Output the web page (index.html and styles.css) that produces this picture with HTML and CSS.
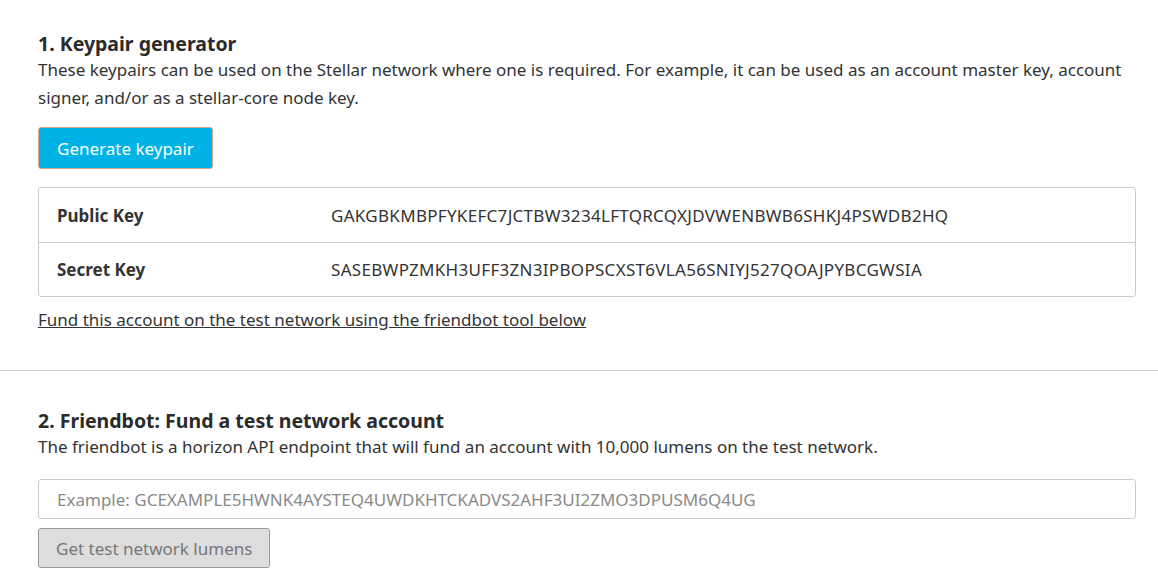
FILE: index.html
```html
<!DOCTYPE html>
<html>
<head>
<meta charset="utf-8">
<link rel="stylesheet" href="styles.css">
</head>
<body>
<section class="section first">
  <h2 class="title">1. Keypair generator</h2>
  <p class="desc">These keypairs can be used on the Stellar network where one is required. For example, it can be used as an account master key, account signer, and/or as a stellar-core node key.</p>
  <button class="btn primary">Generate keypair</button>
  <div class="keytable">
    <div class="keyrow">
      <div class="keylabel">Public Key</div>
      <div class="keyval">GAKGBKMBPFYKEFC7JCTBW3234LFTQRCQXJDVWENBWB6SHKJ4PSWDB2HQ</div>
    </div>
    <div class="keyrow">
      <div class="keylabel">Secret Key</div>
      <div class="keyval">SASEBWPZMKH3UFF3ZN3IPBOPSCXST6VLA56SNIYJ527QOAJPYBCGWSIA</div>
    </div>
  </div>
  <a class="link" href="#">Fund this account on the test network using the friendbot tool below</a>
</section>
<hr class="rule">
<section class="section second">
  <h2 class="title">2. Friendbot: Fund a test network account</h2>
  <p class="desc">The friendbot is a horizon API endpoint that will fund an account with 10,000 lumens on the test network.</p>
  <input class="field" type="text" placeholder="Example: GCEXAMPLE5HWNK4AYSTEQ4UWDKHTCKADVS2AHF3UI2ZMO3DPUSM6Q4UG">
  <button class="btn disabled">Get test network lumens</button>
</section>
</body>
</html>
```
FILE: styles.css
```css
html, body {
  margin: 0;
  padding: 0;
  background: #fff;
}
body {
  font-family: "Noto Sans", "Open Sans", sans-serif;
  color: #333;
  font-size: 17px;
}
.section {
  padding: 0 22px 0 38px;
  display: flex;
  flex-direction: column;
  align-items: flex-start;
}
.first {
  padding-top: 32px;
  padding-bottom: 39px;
}
.second {
  padding-top: 38px;
}
.title {
  margin: 0;
  font-size: 19.5px;
  font-weight: 700;
  line-height: 24px;
  color: #2b2b2b;
}
.desc {
  margin: 0;
  line-height: 28px;
  font-size: 17px;
  color: #333;
}
.btn {
  font-family: inherit;
  font-size: 17px;
  height: 42px;
  padding: 0 18px;
  border-radius: 3px;
  cursor: pointer;
}
.primary {
  margin-top: 15px;
  background: #00b2e5;
  color: #fff;
  border: 1px solid #e2a68c;
}
.keytable {
  margin-top: 18px;
  align-self: stretch;
  border: 1px solid #ccc;
  border-radius: 3px;
}
.keyrow {
  display: flex;
  align-items: center;
  height: 54px;
  padding: 0 18px;
}
.keyrow + .keyrow {
  border-top: 1px solid #ccc;
  height: 53px;
}
.keylabel {
  width: 274px;
  font-weight: 700;
}
.keyval {
  letter-spacing: 0.3px;
}
.link {
  margin-top: 12px;
  color: #333;
  text-decoration: underline;
  line-height: 22px;
}
.rule {
  margin: 0;
  border: 0;
  border-top: 1px solid #ccc;
}
.field {
  margin-top: 18px;
  align-self: stretch;
  height: 40px;
  box-sizing: border-box;
  border: 1px solid #ccc;
  border-radius: 3px;
  padding: 0 18px;
  font-family: inherit;
  font-size: 17px;
  color: #333;
}
.field::placeholder {
  color: #8a8a8a;
}
.disabled {
  margin-top: 9px;
  height: 40px;
  padding: 0 17px;
  background: #ddd;
  color: #777;
  border: 1px solid #999;
}
```
